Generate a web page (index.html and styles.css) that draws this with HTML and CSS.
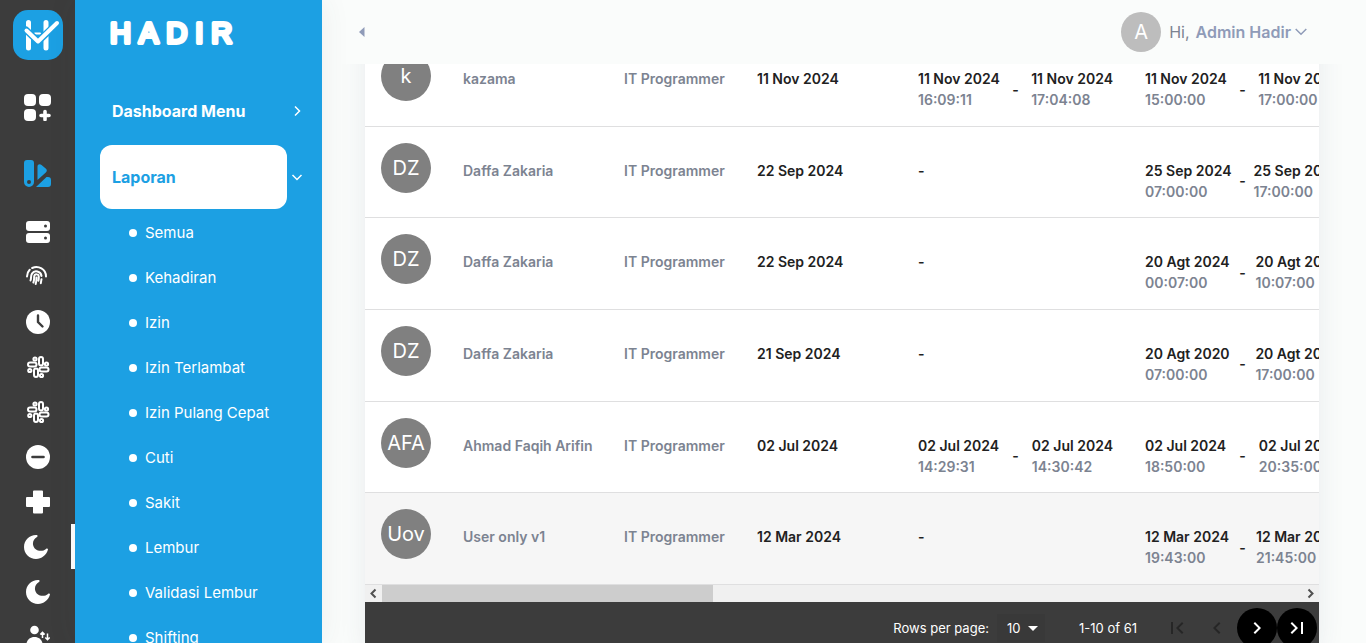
FILE: index.html
```html
<!DOCTYPE html>
<html lang="id">
<head>
<meta charset="utf-8">
<title>Hadir</title>
<link rel="stylesheet" href="styles.css">
</head>
<body>
<svg class="defs" aria-hidden="true">
  <symbol id="slack" viewBox="0 0 24 24"><g fill="none" stroke="currentColor" stroke-width="2"><rect x="13" y="2" width="4" height="8.500" rx="2"/><rect x="2" y="7.500" width="8.500" height="4" rx="2"/><rect x="13.500" y="12.500" width="9" height="4" rx="2"/><rect x="8" y="13.500" width="4" height="8.500" rx="2"/><circle cx="9" cy="4" r="1.600"/><circle cx="20.500" cy="9" r="1.600"/><circle cx="3.800" cy="15.500" r="1.600"/><circle cx="15.500" cy="20.500" r="1.600"/></g></symbol>
  <symbol id="moon" viewBox="0 0 24 24"><path fill="currentColor" d="M12 0C5.400 0 0 5.400 0 12s5.400 12 12 12c5.600 0 10.400-3.900 11.900-9.200.4-1.300-1-1.700-1.900-.9C18.500 17.300 10 16.600 9 9.500 8.600 6.200 10.300 3.800 13 2c1-.8.800-2-1-2z"/></symbol>
</svg>
<div class="app">
  <nav class="rail" aria-label="Pintasan">
    <a class="rail-logo" href="#" aria-label="Hadir">
      <svg width="50" height="50" viewBox="0 0 50 50"><g fill="none" stroke-linecap="round"><path stroke="#fff" stroke-width="5" d="M15.500 12.500v25.500M33 12.500v25.500"/><path stroke="#fff" stroke-width="2" d="M22 23.500h5"/><path stroke="#1ca0e3" stroke-width="7" d="M13 20 25 31.500 45 12.500"/><path stroke="#fff" stroke-width="4" d="M13.500 20.500 25 31.500 44 13" stroke-linejoin="round"/></g></svg>
    </a>
    <a class="rail-main" href="#" aria-label="Dashboard Menu"><svg width="27" height="27" viewBox="0 0 27 27" fill="currentColor"><rect width="12" height="12" rx="4"/><rect x="15" width="12" height="12" rx="4"/><rect y="15" width="12" height="12" rx="4"/><path d="M21 17.500v8M17 21.500h8" stroke="currentColor" stroke-width="3.600" stroke-linecap="round"/></svg></a>
    <a class="rail-main rail-blue" href="#" aria-label="Laporan"><svg width="27" height="27" viewBox="0 0 27 27" fill="currentColor"><path fill-rule="evenodd" d="M3 0h4a3 3 0 0 1 3 3v19a5 5 0 0 1-10 0V3a3 3 0 0 1 3-3zm2 20a2 2 0 1 0 0 4 2 2 0 0 0 0-4z"/><path d="M13.500 20V6.500c0-2 2.300-2.800 4-1.500l4.500 3.800c1.400 1.400.8 2.700-.2 3.700zM12 27l10.500-10H24a3 3 0 0 1 3 3v4a3 3 0 0 1-3 3z"/></svg></a>
    <a class="rail-item" href="#" aria-label="Semua"><svg width="24" height="22" viewBox="0 0 24 22"><g fill="currentColor"><rect width="24" height="10" rx="3"/><rect y="12" width="24" height="10" rx="3"/></g><g fill="#3c3c3c"><circle cx="19.500" cy="5" r="1.500"/><circle cx="19.500" cy="17" r="1.500"/></g></svg></a>
    <a class="rail-item rail-left" href="#" aria-label="Kehadiran"><svg width="21" height="19" viewBox="0 0 21 19" fill="none" stroke="currentColor" stroke-width="2" stroke-linecap="round"><path d="M1 10.500C1 7.500 2 5.500 3.700 3.800M6.200 2C12.500-.8 20 3.200 20 10.500M4.500 14.500C5.500 12 4.500 9.800 6 7.600c2.500-3.800 8.800-2.500 9.500 2.400M15.500 13.200l-.7 4M7.400 16.500c1-2.200.6-4 .8-5.800.4-3.200 4.500-3 4.600 0 0 1.800-.1 2.800-.4 4M10.500 11.500c0 2-.1 4-.8 6.500"/></svg></a>
    <a class="rail-item" href="#" aria-label="Izin"><svg width="24" height="24" viewBox="0 0 24 24"><circle cx="12" cy="12" r="12" fill="currentColor"/><path d="M12 5.500V12l4.500 4.500" fill="none" stroke="#3c3c3c" stroke-width="2.400" stroke-linecap="round"/></svg></a>
    <a class="rail-item" href="#" aria-label="Izin Terlambat"><svg width="24" height="24"><use href="#slack"/></svg></a>
    <a class="rail-item" href="#" aria-label="Izin Pulang Cepat"><svg width="24" height="24"><use href="#slack"/></svg></a>
    <a class="rail-item" href="#" aria-label="Cuti"><svg width="24" height="24" viewBox="0 0 24 24"><circle cx="12" cy="12" r="12" fill="currentColor"/><path d="M6.500 12h11" stroke="#3c3c3c" stroke-width="2.600" stroke-linecap="round"/></svg></a>
    <a class="rail-item" href="#" aria-label="Sakit"><svg width="24" height="24" viewBox="0 0 24 24"><path fill="currentColor" d="M8 .5h8a1 1 0 0 1 1 1V7h6a1 1 0 0 1 1 1v8a1 1 0 0 1-1 1h-6v5.500a1 1 0 0 1-1 1H8a1 1 0 0 1-1-1V17H1a1 1 0 0 1-1-1V8a1 1 0 0 1 1-1h6V1.500a1 1 0 0 1 1-1z"/></svg></a>
    <a class="rail-item rail-active" href="#" aria-label="Lembur"><svg width="24" height="24"><use href="#moon"/></svg></a>
    <a class="rail-item" href="#" aria-label="Validasi Lembur"><svg width="24" height="24"><use href="#moon"/></svg></a>
    <a class="rail-item" href="#" aria-label="Shifting"><svg width="24" height="24" viewBox="0 0 24 24"><circle cx="8.500" cy="5" r="4.300" fill="currentColor"/><path fill="currentColor" d="M0 22c0-6 3-10 8.500-10S17 16 17 22z"/><path fill="none" stroke="currentColor" stroke-width="1.500" d="M16.500 13V7.500M14.300 9.500l2.200-2.200 2.200 2.200M21.500 8.500v6M19.300 12.500l2.200 2.200 2.200-2.200"/></svg></a>
  </nav>

  <aside class="sidebar">
    <div class="brand"><svg width="140" height="40" viewBox="0 0 140 40"><text x="0" y="30">HADIR</text></svg></div>
    <button class="menu" type="button"><span class="menu-label">Dashboard Menu</span><svg width="20" height="20" viewBox="0 0 20 20"><path d="m8 5.500 4.500 4.500L8 14.500"/></svg></button>
    <button class="menu menu-open" type="button"><span class="menu-label">Laporan</span><svg width="20" height="20" viewBox="0 0 20 20"><path d="m5.500 8 4.500 4.500L14.500 8"/></svg></button>
    <ul class="submenu">
      <li><a href="#">Semua</a></li>
      <li><a href="#">Kehadiran</a></li>
      <li><a href="#">Izin</a></li>
      <li><a href="#">Izin Terlambat</a></li>
      <li><a href="#">Izin Pulang Cepat</a></li>
      <li><a href="#">Cuti</a></li>
      <li><a href="#">Sakit</a></li>
      <li><a href="#">Lembur</a></li>
      <li><a href="#">Validasi Lembur</a></li>
      <li><a href="#">Shifting</a></li>
    </ul>
  </aside>

  <div class="page">
    <header class="topbar">
      <button class="collapse" type="button" aria-label="Ciutkan menu"><svg width="6" height="10" viewBox="0 0 6 10"><path d="M5.500 0v10L0 5z" fill="#8f9bb8"/></svg></button>
      <button class="user" type="button"><span class="user-avatar">A</span><span class="hi">Hi,</span><b>Admin Hadir</b><svg width="12" height="8" viewBox="0 0 12 8"><path d="m.7 1 5.300 5.300L11.300 1" fill="none" stroke="#8f9bb8" stroke-width="1.500"/></svg></button>
    </header>

    <main class="content">
      <section class="card">
        <div class="table-view">
          <table class="report">
            <colgroup><col class="c-avatar"><col class="c-name"><col class="c-job"><col class="c-date"><col class="c-range"><col class="c-range"><col></colgroup>
            <tbody>
              <tr><td class="pic"><span class="avatar">k</span></td><td>kazama</td><td>IT Programmer</td><td class="date">11 Nov 2024</td><td><div class="range"><div><b>11 Nov 2024</b>16:09:11</div><i>-</i><div><b>11 Nov 2024</b>17:04:08</div></div></td><td><div class="range"><div><b>11 Nov 2024</b>15:00:00</div><i>-</i><div><b>11 Nov 2024</b>17:00:00</div></div></td><td></td></tr>
              <tr><td class="pic"><span class="avatar">DZ</span></td><td>Daffa Zakaria</td><td>IT Programmer</td><td class="date">22 Sep 2024</td><td class="date">-</td><td><div class="range"><div><b>25 Sep 2024</b>07:00:00</div><i>-</i><div><b>25 Sep 2024</b>17:00:00</div></div></td><td></td></tr>
              <tr><td class="pic"><span class="avatar">DZ</span></td><td>Daffa Zakaria</td><td>IT Programmer</td><td class="date">22 Sep 2024</td><td class="date">-</td><td><div class="range"><div><b>20 Agt 2024</b>00:07:00</div><i>-</i><div><b>20 Agt 2024</b>10:07:00</div></div></td><td></td></tr>
              <tr><td class="pic"><span class="avatar">DZ</span></td><td>Daffa Zakaria</td><td>IT Programmer</td><td class="date">21 Sep 2024</td><td class="date">-</td><td><div class="range"><div><b>20 Agt 2020</b>07:00:00</div><i>-</i><div><b>20 Agt 2020</b>17:00:00</div></div></td><td></td></tr>
              <tr><td class="pic"><span class="avatar">AFA</span></td><td>Ahmad Faqih Arifin</td><td>IT Programmer</td><td class="date">02 Jul 2024</td><td><div class="range"><div><b>02 Jul 2024</b>14:29:31</div><i>-</i><div><b>02 Jul 2024</b>14:30:42</div></div></td><td><div class="range"><div><b>02 Jul 2024</b>18:50:00</div><i>-</i><div><b>02 Jul 2024</b>20:35:00</div></div></td><td></td></tr>
              <tr class="hovered"><td class="pic"><span class="avatar">Uov</span></td><td>User only v1</td><td>IT Programmer</td><td class="date">12 Mar 2024</td><td class="date">-</td><td><div class="range"><div><b>12 Mar 2024</b>19:43:00</div><i>-</i><div><b>12 Mar 2024</b>21:45:00</div></div></td><td></td></tr>
            </tbody>
          </table>
        </div>
        <div class="scrollbar" aria-hidden="true">
          <svg width="17" height="17" viewBox="0 0 17 17"><path d="M10.500 4.500 6.500 8.500l4 4"/></svg>
          <div class="track"><div class="thumb"></div></div>
          <svg width="17" height="17" viewBox="0 0 17 17"><path d="m6.500 4.500 4 4-4 4"/></svg>
        </div>
        <footer class="pager">
          <label for="rows">Rows per page:</label>
          <div class="select-wrap"><select id="rows"><option>10</option><option>25</option></select><svg width="10" height="5" viewBox="0 0 10 5"><path d="M0 0h10L5 5z" fill="#fff"/></svg></div>
          <span class="count">1-10 of 61</span>
          <div class="pager-buttons">
            <button type="button" disabled aria-label="Halaman pertama"><svg width="24" height="24" viewBox="0 0 24 24"><path d="M18.400 7.400 17 6l-6 6 6 6 1.400-1.400-4.600-4.600zM6 6h2v12H6z"/></svg></button>
            <button type="button" disabled aria-label="Sebelumnya"><svg width="24" height="24" viewBox="0 0 24 24"><path d="M15.400 7.400 14 6l-6 6 6 6 1.400-1.400-4.600-4.600z"/></svg></button>
            <button type="button" aria-label="Berikutnya"><svg width="24" height="24" viewBox="0 0 24 24"><path d="M10 6 8.600 7.400l4.600 4.600-4.600 4.600L10 18l6-6z"/></svg></button>
            <button type="button" aria-label="Halaman terakhir"><svg width="24" height="24" viewBox="0 0 24 24"><path d="m5.600 7.400 4.600 4.600-4.600 4.600L7 18l6-6-6-6zM16 6h2v12h-2z"/></svg></button>
          </div>
        </footer>
      </section>
    </main>
  </div>
</div>
</body>
</html>
```
FILE: styles.css
```css
* { box-sizing: border-box; }
body {
  margin: 0;
  font-family: Inter, "Open Sans", sans-serif;
  font-size: 14px;
  background: #fafcfb;
  color: #7c8391;
}
button { font: inherit; color: inherit; background: none; border: 0; padding: 0; }
a { color: inherit; text-decoration: none; }
svg { display: block; flex: none; }
.defs { position: absolute; width: 0; height: 0; }

.app { display: flex; height: 100vh; overflow: hidden; }

/* Icon rail */
.rail { flex: none; width: 75px; background: #3c3c3c; color: #fff; overflow: hidden; }
.rail a { display: flex; align-items: center; }
.rail .rail-logo { margin: 10px 0 14px 13px; width: 50px; height: 50px; border-radius: 15px; background: #1ca0e3; }
.rail .rail-main { height: 66px; padding-left: 24px; }
.rail .rail-blue { color: #1ca0e3; }
.rail-item { height: 45px; padding-left: 26px; }
.rail-blue + .rail-item { margin-top: 3px; }
.rail-left svg { margin-bottom: 2px; }
.rail-active { padding-left: 24px; border-right: 4px solid #fff; }

/* Sidebar */
.sidebar { flex: none; width: 247px; padding: 0 15px 0 25px; background: #1ca0e3; color: #fff; overflow: hidden; z-index: 2; box-shadow: 0 0 28px rgba(60, 80, 80, 0.08); }
.brand { height: 79px; padding: 13px 0 0 10px; }
.brand text {
  font: 400 29px "Liberation Sans", sans-serif;
  letter-spacing: 8px;
  fill: #fff;
  stroke: #fff;
  stroke-width: 4px;
  stroke-linejoin: round;
}
.menu { display: flex; align-items: center; width: 100%; height: 64px; margin-bottom: 2px; font-size: 16px; font-weight: 700; text-align: left; }
.menu-label { flex: 1; padding-left: 12px; line-height: 64px; border-radius: 12px; }
.menu-open { margin-bottom: 0; }
.menu-open .menu-label { background: #fff; color: #1ca0e3; }
.menu path { fill: none; stroke: #fff; stroke-width: 1.5; }
.submenu { margin: 0; padding: 0; list-style: none; font-size: 15px; }
.submenu a { display: flex; align-items: center; gap: 8px; height: 45px; padding: 2px 0 0 29px; }
.submenu a::before { content: ""; width: 8px; height: 8px; border-radius: 50%; background: #fff; }

/* Top bar */
.page { flex: 1; min-width: 0; display: flex; flex-direction: column; }
.topbar { flex: none; z-index: 1; display: flex; align-items: center; justify-content: space-between; height: 64px; padding: 0 59px 0 37px; background: #fafcfb; }
.user { display: flex; align-items: center; font-size: 16px; color: #8f9bb8; }
.user-avatar { width: 40px; height: 40px; margin-right: 8px; border-radius: 50%; background: #bdbdbd; color: #fff; font-size: 20px; line-height: 40px; text-align: center; }
.hi { margin-right: 6px; color: #7c8391; }
.user b { margin-right: 4px; font-weight: 600; }

/* Report card, scrolled partly beneath the top bar */
.content { flex: 1; min-height: 0; padding: 0 47px 0 43px; }
.card { margin-top: -29px; background: #fff; border-radius: 12px; box-shadow: 0 0 28px rgba(60, 70, 100, 0.09); }
.table-view { overflow: hidden; }
.report { width: 2650px; table-layout: fixed; border-collapse: separate; border-spacing: 0; height: 550px; }
.c-avatar { width: 82px; }
.c-name, .c-date { width: 161px; }
.c-job { width: 133px; }
.c-range { width: 227px; }
.report td { padding: 33px 16px 12px; border-bottom: 1px solid #dfdfe0; font-weight: 600; line-height: 21px; vertical-align: top; white-space: nowrap; }
.report .pic { padding: 16px 16px 0; }
.avatar { display: block; width: 50px; height: 50px; border-radius: 50%; background: #808080; color: #fff; font-size: 20px; font-weight: 400; line-height: 50px; text-align: center; }
.report .date, .range b, .range i { color: #212121; }
.range { display: flex; align-items: center; justify-content: space-between; }
.range b { display: block; font-weight: 600; }
.range i { font-style: normal; }
.hovered { background: #f6f6f6; }

.scrollbar { display: flex; height: 17px; background: #f0f0f0; }
.scrollbar path { fill: none; stroke: #505050; stroke-width: 2; }
.track { flex: 1; }
.thumb { width: 36%; height: 17px; background: #cdcdcd; }

.pager { display: flex; align-items: center; justify-content: flex-end; height: 52px; padding-right: 2px; background: #3c3c3c; color: #fff; border-radius: 0 0 12px 12px; font-size: 13px; }
.select-wrap { display: flex; align-items: center; width: 48px; height: 28px; margin: 0 34px 0 8px; background: #393939; }
.select-wrap select { appearance: none; width: 31px; padding: 0 0 0 10px; border: 0; background: none; color: #fff; font: inherit; }
.count { margin-right: 20px; }
.pager-buttons { display: flex; }
.pager-buttons button { display: grid; place-items: center; width: 40px; height: 40px; border-radius: 50%; background: #000; fill: #fff; }
.pager-buttons button:disabled { background: none; fill: #262626; }
```
